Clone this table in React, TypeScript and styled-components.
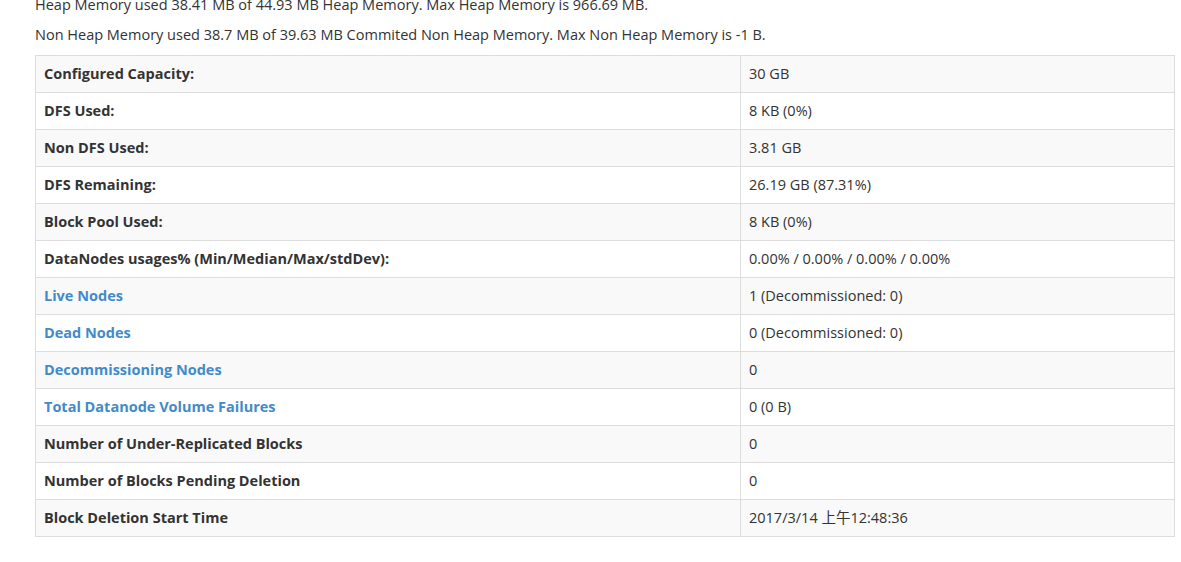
import React from "react";
import styled, { createGlobalStyle } from "styled-components";

const Global = createGlobalStyle`
  html, body { margin: 0; padding: 0; background: #fff; }
  body {
    font-family: "Open Sans", "Noto Sans CJK SC", sans-serif;
    font-size: 14.5px;
    line-height: 20px;
    color: #333;
  }
`;

const Page = styled.div`
  padding: 0 6px 0 35px;
  margin-top: -5px;
`;

const Para = styled.p`
  margin: 0 0 10px;
  line-height: 20px;
`;

const Table = styled.table`
  width: 1140px;
  border-collapse: collapse;
  border: 1px solid #ddd;
`;

const Row = styled.tr<{ $striped: boolean }>`
  background: ${(p) => (p.$striped ? "#f9f9f9" : "#fff")};
`;

const HeadCell = styled.th`
  text-align: left;
  font-weight: bold;
  padding: 8px;
  line-height: 20px;
  border: 1px solid #ddd;
  width: 688px;
`;

const ValueCell = styled.td`
  padding: 8px;
  line-height: 20px;
  border: 1px solid #ddd;
`;

const Link = styled.a`
  color: #428bca;
  text-decoration: none;
`;

type R = { label: string; value: string; link?: boolean };

const rows: R[] = [
  { label: "Configured Capacity:", value: "30 GB" },
  { label: "DFS Used:", value: "8 KB (0%)" },
  { label: "Non DFS Used:", value: "3.81 GB" },
  { label: "DFS Remaining:", value: "26.19 GB (87.31%)" },
  { label: "Block Pool Used:", value: "8 KB (0%)" },
  { label: "DataNodes usages% (Min/Median/Max/stdDev):", value: "0.00% / 0.00% / 0.00% / 0.00%" },
  { label: "Live Nodes", value: "1 (Decommissioned: 0)", link: true },
  { label: "Dead Nodes", value: "0 (Decommissioned: 0)", link: true },
  { label: "Decommissioning Nodes", value: "0", link: true },
  { label: "Total Datanode Volume Failures", value: "0 (0 B)", link: true },
  { label: "Number of Under-Replicated Blocks", value: "0" },
  { label: "Number of Blocks Pending Deletion", value: "0" },
  { label: "Block Deletion Start Time", value: "2017/3/14 上午12:48:36" },
];

export default function App() {
  return (
    <>
      <Global />
      <Page>
        <Para>Heap Memory used 38.41 MB of 44.93 MB Heap Memory. Max Heap Memory is 966.69 MB.</Para>
        <Para>Non Heap Memory used 38.7 MB of 39.63 MB Commited Non Heap Memory. Max Non Heap Memory is -1 B.</Para>
        <Table>
          <tbody>
            {rows.map((r, i) => (
              <Row key={r.label} $striped={i % 2 === 0}>
                <HeadCell>{r.link ? <Link href="#">{r.label}</Link> : r.label}</HeadCell>
                <ValueCell>{r.value}</ValueCell>
              </Row>
            ))}
          </tbody>
        </Table>
      </Page>
    </>
  );
}
